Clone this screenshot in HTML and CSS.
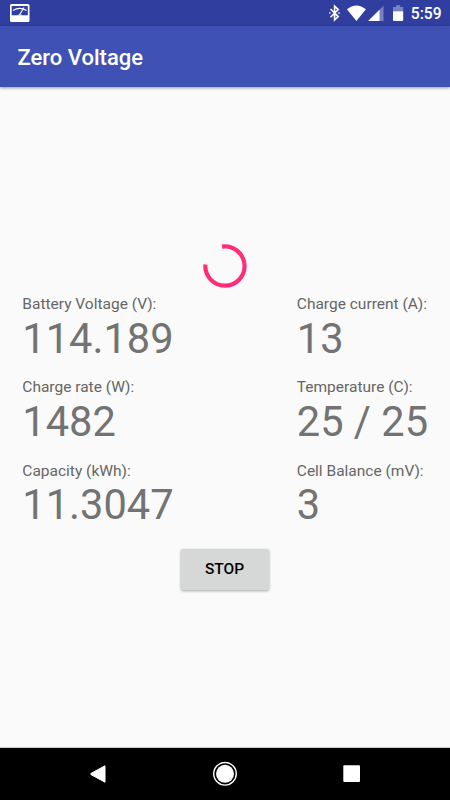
FILE: index.html
```html
<!DOCTYPE html>
<html lang="en">
<head>
<meta charset="utf-8">
<title>Zero Voltage</title>
<link rel="stylesheet" href="styles.css">
</head>
<body>
<div class="screen">
  <header class="status">
    <svg class="meter" width="20" height="19" viewBox="0 0 20 19">
      <rect x="0" y="0" width="19.5" height="18" rx="1.5" fill="#fff"/>
      <rect x="1.7" y="2" width="16.1" height="9.3" fill="#303f9f"/>
      <path d="M3 6.5Q9.7 2.2 16.5 6.5" fill="none" stroke="#fff" stroke-width="1.1"/>
      <path d="M9.5 11L14 3.5" stroke="#fff" stroke-width="1.1"/>
      <path d="M6.5 11.5Q9.8 9.5 13.2 11.5z" fill="#fff"/>
    </svg>
    <div class="tray">
      <svg width="77" height="20" viewBox="0 0 77 20">
        <path d="M1.5 6L9.2 13.6L5.6 17V3.2L9.2 6.6L1.5 14.2" fill="none" stroke="#fff" stroke-width="1.6"/>
        <path d="M.2 10.1h1.3M9.3 10.1h1.4" stroke="#fff" stroke-width="1.5"/>
        <path d="M17.9 6.3Q27.4-1.4 36.9 6.3L27.4 18z" fill="#fff"/>
        <path d="M54.5 2.7V18H39.2z" fill="#fff" fill-opacity=".35"/>
        <path d="M50.5 6.7V18H39.2z" fill="#fff"/>
        <path d="M64 4.1h3V2.2h4.2v1.9h3v4.2H64z" fill="#fff" fill-opacity=".35"/>
        <path d="M64 8.3h10.2V17q0 1-1 1H65q-1 0-1-1z" fill="#fff"/>
      </svg>
      <span class="clock">5:59</span>
    </div>
  </header>
  <div class="toolbar"><h1>Zero Voltage</h1></div>
  <main>
    <svg class="spinner" width="46" height="46" viewBox="0 0 46 46">
      <path d="M20 3.7A19.6 19.6 0 1 1 3.4 21.5" fill="none" stroke="#ff2e78" stroke-width="4.2"/>
    </svg>
    <div class="readings">
      <div><div class="label">Battery Voltage (V):</div><div class="value">114.189</div></div>
      <div><div class="label">Charge current (A):</div><div class="value">13</div></div>
      <div><div class="label">Charge rate (W):</div><div class="value">1482</div></div>
      <div><div class="label">Temperature (C):</div><div class="value">25 / 25</div></div>
      <div><div class="label">Capacity (kWh):</div><div class="value">11.3047</div></div>
      <div><div class="label">Cell Balance (mV):</div><div class="value">3</div></div>
    </div>
    <button class="stop">STOP</button>
  </main>
  <nav>
    <svg width="450" height="52" viewBox="0 0 450 52">
      <path d="M105 17.8V34.2L91 26.6q-1-.6 0-1.2z" fill="#fff" stroke="#fff" stroke-linejoin="round"/>
      <circle cx="225" cy="25.8" r="11.3" fill="none" stroke="#fff" stroke-width="1.4"/>
      <circle cx="225" cy="25.8" r="9" fill="#fff"/>
      <rect x="343.3" y="17.3" width="16.7" height="16.7" rx="1" fill="#fff"/>
    </svg>
  </nav>
</div>
</body>
</html>
```
FILE: styles.css
```css
* { box-sizing: border-box; }
body { margin: 0; font-family: Roboto, sans-serif; background: #fafafa; }
.screen { width: 450px; height: 800px; display: flex; flex-direction: column; overflow: hidden; }
.status { height: 26px; background: #303f9f; display: flex; justify-content: space-between; padding: 4px 8.5px 0 10px; }
.tray { display: flex; margin-top: -1px; }
.tray svg { margin-right: 5px; }
.meter { display: block; }
.clock { color: #fff; font-size: 15.6px; font-weight: 500; line-height: 23px; white-space: nowrap; }
.toolbar { height: 61px; background: #3f51b5; box-shadow: 0 1px 3px rgba(0,0,0,.4); display: flex; align-items: center; padding: 2px 0 0 17.5px; }
h1 { margin: 0; color: #fff; font-size: 22px; font-weight: 500; line-height: 28px; }
main { flex: 1; display: flex; flex-direction: column; align-items: center; padding-top: 156px; }
.spinner { display: block; }
.readings { width: 450px; padding: 6px 0 0 22.3px; display: grid; grid-template-columns: 274.5px 1fr; grid-auto-rows: 83.3px; }
.label { color: #666; font-size: 15.5px; line-height: 18px; white-space: nowrap; }
.value { margin-top: -.3px; color: #737373; font-size: 41.6px; line-height: 51px; white-space: nowrap; }
.stop { width: 88px; height: 41px; margin: 4px 1px 0 0; padding: 0; border: 0; border-radius: 2px; background: #d6d7d7; color: #000; font: 500 15.5px/41px Roboto, sans-serif; box-shadow: 0 1px 3px rgba(0,0,0,.35); }
nav { height: 52px; background: #000; box-shadow: 0 -1px 0 rgba(0,0,0,.2); }
nav svg { display: block; }
```
